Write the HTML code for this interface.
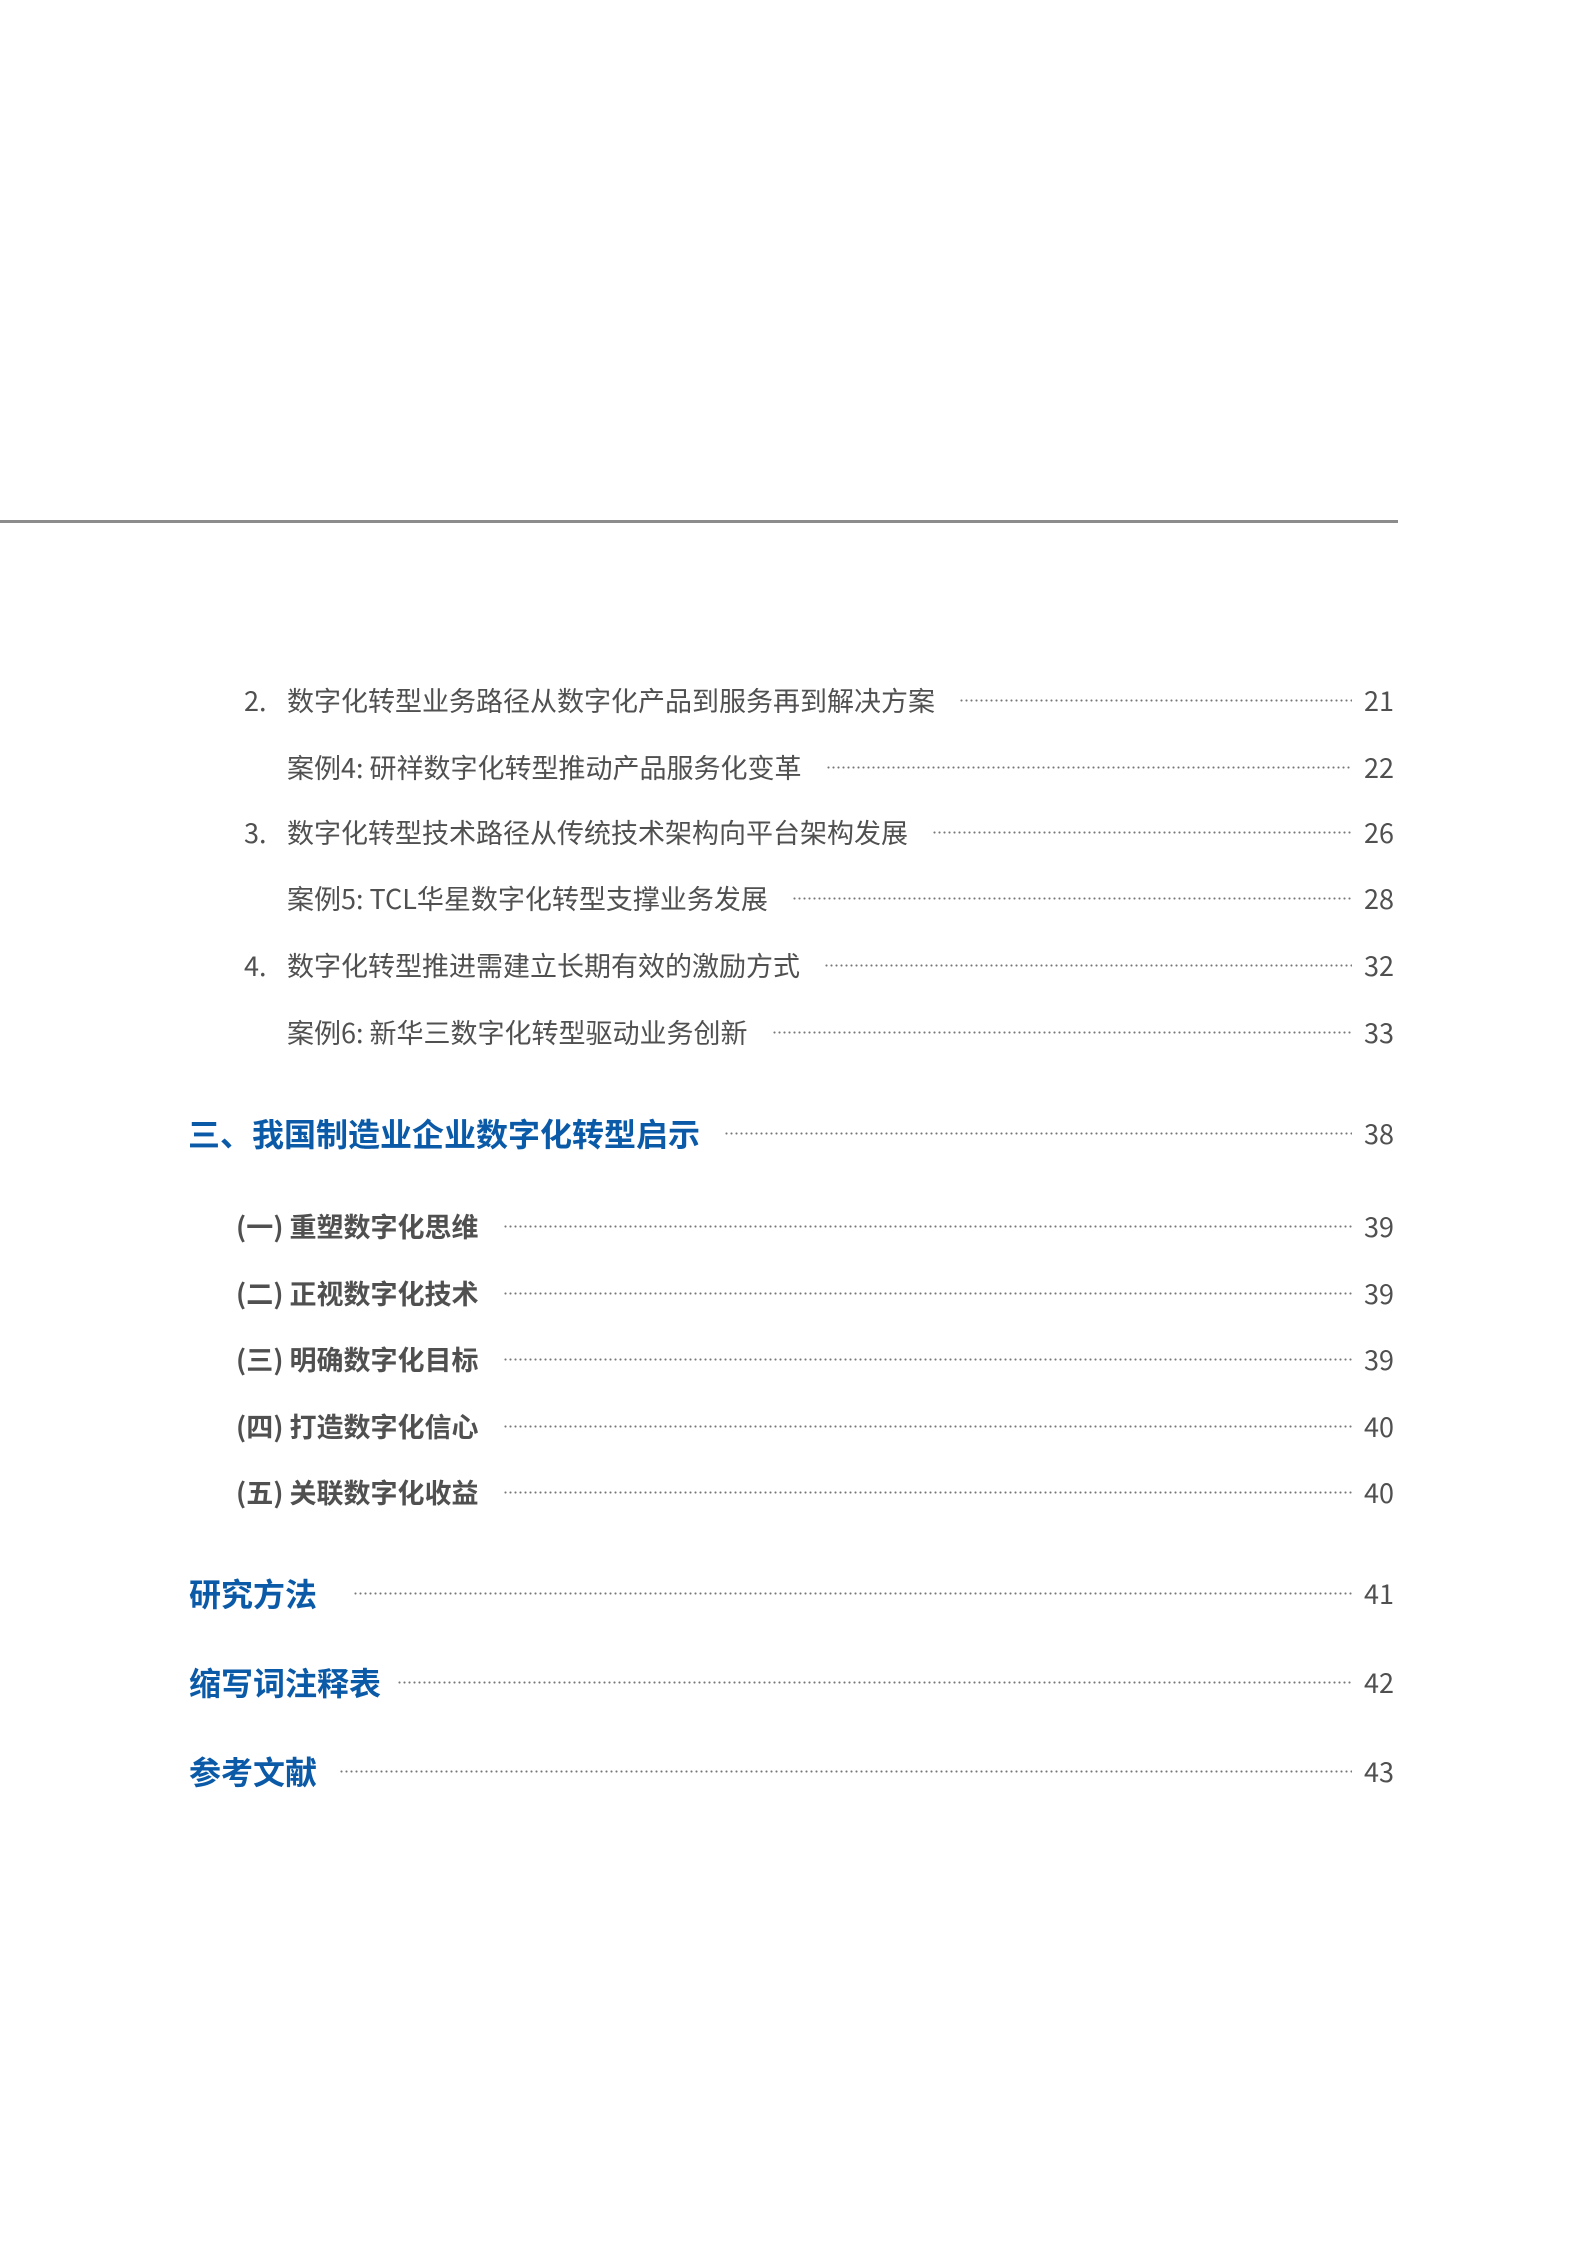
<!DOCTYPE html>
<html><head><meta charset="utf-8"><style>
html,body{margin:0;padding:0;background:#fff;}
body{width:1586px;height:2244px;position:relative;overflow:hidden;font-family:"Liberation Sans","Noto Sans CJK SC",sans-serif;}
.hr{position:absolute;left:0;top:520px;width:1398px;height:3px;background:#8c8c8c;}
.row{position:absolute;right:192px;height:40px;line-height:40px;display:flex;align-items:center;color:#505050;font-size:27px;white-space:nowrap;}
.row .t{font-family:"Noto Sans CJK SC",sans-serif;}
.row .d{flex:1;height:3px;margin:0 12px 0 24px;background-image:radial-gradient(circle,#777 0.9px,transparent 1.2px);background-size:5px 3px;background-repeat:repeat-x;}
.row .n{font-family:"Noto Sans CJK SC",sans-serif;font-size:27px;color:#505050;}
.num{display:inline-block;width:43px;}
.blue .t{color:#0b5aa8;font-weight:bold;font-size:32px;}
.sub .t{font-weight:bold;font-size:27px;}
</style></head><body>
<div class="hr"></div>

<div class="row" style="left:244px;top:680px"><span class="t"><span class="num">2.</span>数字化转型业务路径从数字化产品到服务再到解决方案</span><span class="d"></span><span class="n">21</span></div>
<div class="row" style="left:287px;top:747px"><span class="t">案例4: 研祥数字化转型推动产品服务化变革</span><span class="d"></span><span class="n">22</span></div>
<div class="row" style="left:244px;top:812px"><span class="t"><span class="num">3.</span>数字化转型技术路径从传统技术架构向平台架构发展</span><span class="d"></span><span class="n">26</span></div>
<div class="row" style="left:287px;top:878px"><span class="t">案例5: TCL华星数字化转型支撑业务发展</span><span class="d"></span><span class="n">28</span></div>
<div class="row" style="left:244px;top:945px"><span class="t"><span class="num">4.</span>数字化转型推进需建立长期有效的激励方式</span><span class="d"></span><span class="n">32</span></div>
<div class="row" style="left:287px;top:1012px"><span class="t">案例6: 新华三数字化转型驱动业务创新</span><span class="d"></span><span class="n">33</span></div>

<div class="row blue" style="left:188px;top:1113px"><span class="t">三、我国制造业企业数字化转型启示</span><span class="d"></span><span class="n">38</span></div>

<div class="row sub" style="left:236px;top:1206px"><span class="t">(一) 重塑数字化思维</span><span class="d"></span><span class="n">39</span></div>
<div class="row sub" style="left:236px;top:1273px"><span class="t">(二) 正视数字化技术</span><span class="d"></span><span class="n">39</span></div>
<div class="row sub" style="left:236px;top:1339px"><span class="t">(三) 明确数字化目标</span><span class="d"></span><span class="n">39</span></div>
<div class="row sub" style="left:236px;top:1406px"><span class="t">(四) 打造数字化信心</span><span class="d"></span><span class="n">40</span></div>
<div class="row sub" style="left:236px;top:1472px"><span class="t">(五) 关联数字化收益</span><span class="d"></span><span class="n">40</span></div>

<div class="row blue" style="left:189px;top:1573px"><span class="t">研究方法</span><span class="d" style="margin-left:36px"></span><span class="n">41</span></div>
<div class="row blue" style="left:189px;top:1662px"><span class="t">缩写词注释表</span><span class="d" style="margin-left:16px"></span><span class="n">42</span></div>
<div class="row blue" style="left:189px;top:1751px"><span class="t">参考文献</span><span class="d" style="margin-left:22px"></span><span class="n">43</span></div>
</body></html>
